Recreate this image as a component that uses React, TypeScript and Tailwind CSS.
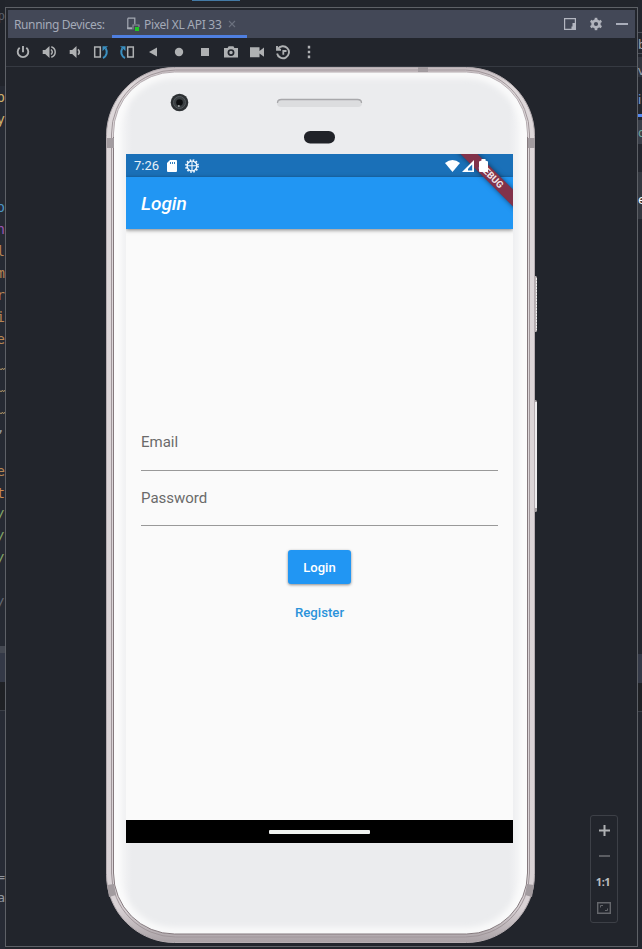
import type { ReactNode } from "react";

type CodeLine = { ch: string; color: string };

const codeLines: CodeLine[] = [
  { ch: "p", color: "text-[#d0b06c]" },
  { ch: "y", color: "text-[#d0b06c]" },
  { ch: "", color: "" },
  { ch: "", color: "" },
  { ch: "", color: "" },
  { ch: "p", color: "text-[#4b94c6]" },
  { ch: "n", color: "text-[#9a55b4]" },
  { ch: "l", color: "text-[#b78554]" },
  { ch: "m", color: "text-[#b78554]" },
  { ch: "r", color: "text-[#b78554]" },
  { ch: "i", color: "text-[#b78554]" },
  { ch: "e", color: "text-[#b78554]" },
  { ch: "~", color: "" },
  { ch: "~", color: "" },
  { ch: "~", color: "" },
  { ch: ",", color: "text-[#8e949f]" },
  { ch: "", color: "" },
  { ch: "e", color: "text-[#b78554]" },
  { ch: "t", color: "text-[#c98a50]" },
  { ch: "/", color: "text-[#85a869]" },
  { ch: "/", color: "text-[#85a869]" },
  { ch: "/", color: "text-[#85a869]" },
  { ch: "", color: "" },
  { ch: "/", color: "text-[#626873]" },
];

function Squiggle() {
  return (
    <svg className="mt-[17px] shrink-0" width="5" height="4" viewBox="0 0 5 4" fill="none">
      <path d="M0 1.500l1 1.500 1.500-2 1 2L5 1" stroke="#a58d62" />
    </svg>
  );
}

function EditorLeft() {
  return (
    <div className="flex w-[5px] shrink-0 flex-col overflow-hidden bg-[#262a33] font-['DejaVu_Sans_Mono',monospace] text-[14px]">
      <div className="flex h-[85.500px] shrink-0 justify-end bg-[#21242b] text-[12px] leading-[32px] text-[#5c616b]">p</div>
      {codeLines.map((l, i) => (
        <div key={i} className={`flex h-[22px] shrink-0 justify-end leading-[23px] ${l.color}`}>
          {l.ch === "~" ? <Squiggle /> : l.ch}
        </div>
      ))}
      <div className="mt-auto h-[7px] shrink-0 bg-[#454952]" />
      <div className="h-[29px] shrink-0 bg-[#343947]" />
      <div className="h-[28px] shrink-0 bg-[#1f2125]" />
      <div className="flex h-[239px] shrink-0 flex-col border-t border-[#3b3f47] bg-[#272b35] pt-[155px] text-[13px] leading-[21px] text-[#90959d]">
        <div className="flex justify-end">=</div>
        <div className="flex justify-end">a</div>
      </div>
    </div>
  );
}

function EditorRight() {
  return (
    <div className="flex w-1 shrink-0 flex-col overflow-hidden bg-[#23262e] font-['Noto_Sans',sans-serif] text-[13px]">
      <div className="h-[33px] shrink-0 border-b border-[#4a4e57]" />
      <div className="h-[21px] shrink-0 border-b border-[#4a4e57] leading-[22px] text-[#9da3ae]">b</div>
      <div className="mt-[3px] h-[20px] shrink-0 bg-[#31353e] leading-[27px] text-[#9da3ae]">v</div>
      <div className="h-[37px] shrink-0 leading-[44px] text-[#7d9fd6]">i</div>
      <div className="h-[3px] shrink-0 bg-[#568af2]" />
      <div className="mt-[3px] h-6 shrink-0 bg-[#3a3f49] leading-[24px] text-[#6ea5a0]">c</div>
      <div className="mt-7 h-[47px] shrink-0 bg-[#343840] leading-[54px] text-white">e</div>
      <div className="mt-[435px] h-[29px] shrink-0 bg-[#343947]" />
      <div className="h-[28px] shrink-0 bg-[#1f2125]" />
      <div className="grow border-t border-[#3b3f47] bg-[#23262e]" />
    </div>
  );
}

function RunningDeviceIcon() {
  return (
    <svg width="14" height="14" viewBox="0 0 14 14" fill="none">
      <path d="M1.8 1.200h7v6M6 11.500H1.800V1.200" stroke="#a5aab4" strokeWidth="1.200" />
      <path d="M1.200 11.300H6" stroke="#a5aab4" strokeWidth="2" />
      <path d="M7 12.500V8h6v2" stroke="#8c929c" strokeWidth="1.100" />
      <path d="M9 10h4v4H9z" fill="#22c527" />
    </svg>
  );
}

function Header() {
  return (
    <div className="mx-[2px] mt-[2px] flex h-7 shrink-0 bg-[#434857] font-['Noto_Sans',sans-serif] text-[12px] leading-[29px] text-[#a3aab7]">
      <span className="w-[104px] whitespace-nowrap pl-[6px] tracking-[-0.380px]">Running Devices:</span>
      <div className="flex w-[135px] items-center border-b-[3px] border-[#4f7fe0] pl-[14px] pt-[3px]">
        <RunningDeviceIcon />
        <span className="ml-[4px] w-[78px] whitespace-nowrap tracking-[-0.280px]">Pixel XL API 33</span>
        <svg className="ml-[6px]" width="8" height="8" viewBox="0 0 8 8">
          <path d="M1 1l6 6M7 1l-6 6" stroke="#6b717e" strokeWidth="1.100" />
        </svg>
      </div>
      <div className="ml-auto flex items-center pr-[7px]">
        <svg width="12" height="12" viewBox="0 0 12 12">
          <path d="M.6.6h10.800v10.800H.6z" fill="none" stroke="#b3b6c0" strokeWidth="1.200" />
          <path d="M8.500 5H12v7H7.500V8.500h1z" fill="#b3b6c0" />
        </svg>
        <svg className="ml-[13px]" width="14" height="14" viewBox="0 0 14 14">
          <g fill="#b0b3bc">
            <path d="M5.700.8h2.600v12.400H5.700z" />
            <path d="M5.700.8h2.600v12.400H5.700z" transform="rotate(60 7 7)" />
            <path d="M5.700.8h2.600v12.400H5.700z" transform="rotate(120 7 7)" />
          </g>
          <circle cx="7" cy="7" r="3.500" fill="none" stroke="#b0b3bc" strokeWidth="2.400" />
          <circle cx="7" cy="7" r="2.100" fill="#434857" />
        </svg>
        <div className="ml-[13px] h-[2px] w-3 bg-[#a9adba]" />
      </div>
    </div>
  );
}

function ToolIcon({ children }: { children: ReactNode }) {
  return (
    <div className="flex w-[26px] justify-center">
      <svg width="16" height="16" viewBox="0 0 16 16" fill="none" stroke="#afb1b3" strokeWidth="1.500">
        {children}
      </svg>
    </div>
  );
}

function Toolbar() {
  return (
    <div className="flex h-[29px] shrink-0 items-center border-b border-[#363a42] pl-1">
      <ToolIcon>
        <path d="M4.700 3.700a5.300 5.300 0 1 0 6.600 0M8 2v6.200" strokeWidth="1.900" />
      </ToolIcon>
      <ToolIcon>
        <path d="M1.700 6h2.500L8.500 2v12L4.200 10H1.700z" fill="#afb1b3" stroke="none" />
        <path d="M10 5.500q2.600 2.500 0 5M10.300 2.700c5.200 2 5.200 8.600 0 10.600" strokeWidth="1.500" />
      </ToolIcon>
      <ToolIcon>
        <path d="M2.700 6h2.500L9.500 2v12L5.200 10H2.700z" fill="#afb1b3" stroke="none" />
        <path d="M11 5.300q2.600 2.700 0 5.400" strokeWidth="1.700" />
      </ToolIcon>
      <ToolIcon>
        <path d="M1.700 3h5.600v10H1.700z" />
        <path d="M10 14c3.800-2 4.800-6 2.700-9.800" stroke="#3a8fc0" strokeWidth="2" />
        <path d="M9.500 2.200H15L9.500 7z" fill="#3a8fc0" stroke="none" />
      </ToolIcon>
      <ToolIcon>
        <path d="M8.700 3h5.600v10H8.700z" />
        <path d="M6 14c-3.800-2-4.800-6-2.700-9.800" stroke="#3a8fc0" strokeWidth="2" />
        <path d="M6.500 2.200H1L6.500 7z" fill="#3a8fc0" stroke="none" />
      </ToolIcon>
      <ToolIcon>
        <path d="M12 3.500v9L4 8z" fill="#afb1b3" stroke="none" />
      </ToolIcon>
      <ToolIcon>
        <circle cx="8" cy="8" r="4.200" fill="#afb1b3" stroke="none" />
      </ToolIcon>
      <ToolIcon>
        <path d="M4 4h8v8H4z" fill="#afb1b3" stroke="none" />
      </ToolIcon>
      <ToolIcon>
        <path d="M1 4h3.600l1-1.800h4.800l1 1.800H15v9.500H1z" fill="#afb1b3" stroke="none" />
        <circle cx="8" cy="8.600" r="2.600" stroke="#22252c" strokeWidth="1.700" />
      </ToolIcon>
      <ToolIcon>
        <path d="M1 3.200h9.500V7L15 3.500v9.200L10.500 9.500v3.700H1z" fill="#afb1b3" stroke="none" />
      </ToolIcon>
      <ToolIcon>
        <path d="M2.800 5.200A6 6 0 1 1 2.100 9.500M2 2v3.800h4" strokeWidth="1.900" />
        <path d="M11.500 7H8.300v3.800" strokeWidth="1.800" />
      </ToolIcon>
      <ToolIcon>
        <path d="M6.800 1.800h2.400v2.600H6.800zM6.800 6.700h2.400v2.600H6.800zM6.800 11.600h2.400v2.600H6.800z" fill="#afb1b3" stroke="none" />
      </ToolIcon>
    </div>
  );
}

function PhoneShell() {
  return (
    <svg className="absolute left-0 top-0" width="432" height="876" viewBox="0 0 432 876">
      <defs>
        <linearGradient id="rim" x1="0" y1="0" x2="0" y2="1">
          <stop offset="0" stopColor="#c5bcc0" />
          <stop offset=".02" stopColor="#ded8da" />
          <stop offset=".96" stopColor="#d9d2d5" />
          <stop offset="1" stopColor="#a9a1a5" />
        </linearGradient>
        <linearGradient id="face" x1="0" y1="0" x2="1" y2="0">
          <stop offset="0" stopColor="#fafafb" />
          <stop offset=".045" stopColor="#ebecee" />
          <stop offset=".955" stopColor="#ebecee" />
          <stop offset="1" stopColor="#fafafb" />
        </linearGradient>
        <filter id="soft" x="-5%" y="-5%" width="110%" height="110%">
          <feGaussianBlur stdDeviation="3" />
        </filter>
        <clipPath id="faceClip">
          <rect x="8" y="5" width="413" height="862" rx="61" />
        </clipPath>
      </defs>
      <rect x="427" y="209" width="4" height="56" rx="1.500" fill="#b9b3b5" />
      <path d="M430.500 211v52" stroke="#eee" strokeDasharray="2 1" />
      <rect x="427" y="333" width="4" height="112" rx="1.500" fill="#a5a1a3" />
      <path d="M429.500 335v106" stroke="#eeedef" strokeWidth="3" />
      <rect x=".5" y=".5" width="428" height="875" rx="68" fill="url(#rim)" stroke="#b5adb1" />
      <rect x="5.500" y="3" width="418" height="867" rx="64" fill="none" stroke="#a0969a" />
      <rect x="7.500" y="5" width="414" height="862" rx="61" fill="url(#face)" />
      <g clipPath="url(#faceClip)">
        <rect x="10" y="7" width="409" height="858" rx="59" fill="none" stroke="#fcfcfc" strokeWidth="8" filter="url(#soft)" />
      </g>
      <path d="M7.500 70V806a61 61 0 0 0 61 61H360.500a61 61 0 0 0 61-61V70" fill="none" stroke="#857a7e" />
      <path d="M7.500 70V66a61 61 0 0 1 61-61H360.500a61 61 0 0 1 61 61v4" fill="none" stroke="#b5acb0" />
      <g fill="#a29b9f">
        <path d="M312 0h10v5h-10zM1 71h7v10H1zM422 71h7v10h-7zM1 818l7-1 2 11-7 2zM428 818l-7-1-2 11 7 2z" />
      </g>
      <circle cx="73.500" cy="35.500" r="8.800" fill="#2d3134" />
      <circle cx="73.500" cy="35.500" r="6" fill="#3a3f42" stroke="#54595d" />
      <circle cx="73.500" cy="35.500" r="3.300" fill="#0c0e10" />
      <circle cx="72.800" cy="39" r="1" fill="#a4a9ab" />
      <rect x="171" y="32" width="85" height="8" rx="4" fill="#dcdddf" />
      <path d="M171.500 36q0-3.500 4-3.500h76q4 0 4 3.500" fill="none" stroke="#a8a8ab" strokeWidth="1.300" />
      <rect x="198" y="64" width="31" height="12.500" rx="6.200" fill="#202228" />
    </svg>
  );
}

function StatusBar() {
  return (
    <div className="flex h-[23px] shrink-0 items-center bg-[#1a70b8] pl-2 text-[13px] text-[#e8f1f8]">
      <span className="w-[31px] leading-[24px]">7:26</span>
      <svg className="ml-[2px]" width="10" height="12" viewBox="0 0 10 12">
        <path d="M3 0h6q1 0 1 1v10q0 1-1 1H1q-1 0-1-1V3z" fill="#fff" />
        <path d="M3.500 2v2M5.500 2v2M7.500 2v2" stroke="#1a70b8" strokeWidth=".9" />
      </svg>
      <svg className="ml-[8px]" width="14" height="14" viewBox="0 0 14 14" fill="none" stroke="#f4faff">
        <circle cx="7" cy="7" r="4.900" strokeWidth="1.400" />
        <circle cx="7" cy="7" r="6.100" strokeWidth="1.600" strokeDasharray="1.600 1.595" />
        <path d="M2 6.700h10M7 3v9" strokeWidth="1.100" />
      </svg>
      <div className="relative z-20 ml-auto mr-[25px] flex items-center">
        <svg width="15" height="12" viewBox="0 0 15 12">
          <path d="M0 3Q7.500-3 15 3L7.500 12z" fill="#fff" />
        </svg>
        <svg className="ml-[2px]" width="12" height="12" viewBox="0 0 12 12">
          <path d="M12 0v12H0z" fill="#fff" />
          <path d="M10.200 4.500v6H6V8.700z" fill="#1a70b8" />
        </svg>
        <svg className="ml-[5px]" width="9" height="13" viewBox="0 0 9 13">
          <path d="M2.500 1.500V0h4v1.500L9 2.500V12q0 1-1 1H1q-1 0-1-1V2.500z" fill="#fff" />
        </svg>
      </div>
    </div>
  );
}

function Field({ label }: { label: string }) {
  return (
    <div className="h-[55.500px] border-b border-[#999] text-[15px] leading-[18px] text-[#6a6a6a]">
      <div className="pt-[18px]">{label}</div>
    </div>
  );
}

function Screen() {
  return (
    <div className="relative mt-[87px] flex h-[689px] w-[387px] flex-col overflow-hidden bg-[#fafafa] font-['Roboto',sans-serif]">
      <StatusBar />
      <div className="flex h-[52px] shrink-0 items-center bg-[#2196f3] pl-[15px] pt-[2px] text-[19px] font-medium italic text-white shadow-[0_1px_4px_rgba(0,0,0,0.5)]">
        Login
      </div>
      <div className="absolute right-[-38px] top-[16px] z-10 h-[12px] w-[120px] rotate-45 bg-[#82324a] text-center text-[9.500px] font-bold leading-[12px] text-[#f3e8ea] shadow-[0_0_5px_rgba(0,0,0,0.5)]">
        DEBUG
      </div>
      <div className="flex grow flex-col px-[15px] pt-[186px]">
        <Field label="Email" />
        <Field label="Password" />
        <div className="mt-[24px] flex h-[34px] w-[63px] items-center justify-center self-center rounded-[3px] bg-[#2196f3] pt-[2px] text-[13px] font-medium text-white shadow-[0_1px_3px_rgba(0,0,0,0.45)]">
          Login
        </div>
        <div className="mt-[20px] self-center text-[13.200px] font-medium leading-[18px] text-[#2b93da]">Register</div>
      </div>
      <div className="flex h-[23px] shrink-0 items-center justify-center bg-black">
        <div className="h-1 w-[101px] rounded-[1px] bg-[#f0f2f0]" />
      </div>
    </div>
  );
}

function ZoomControls() {
  return (
    <div className="mb-[23px] mr-[19px] ml-auto flex h-[108px] w-7 flex-col items-center self-end rounded-[3px] border border-[#3d4047]">
      <svg className="mt-[9px]" width="11" height="11" viewBox="0 0 11 11">
        <path d="M0 5.500h11M5.500 0v11" stroke="#afb1b3" strokeWidth="2" />
      </svg>
      <div className="mt-[19px] h-[2px] w-[11px] bg-[#5b5d62]" />
      <div className="mr-[2px] mt-[16px] h-[18px] font-['Noto_Sans',sans-serif] text-[11px] font-bold leading-[18px] tracking-[-0.400px] text-[#bbbdbf]">1:1</div>
      <svg className="mt-[11px]" width="14" height="12" viewBox="0 0 14 12" fill="none" stroke="#65676c">
        <path d="M.7.7h12.600v10.600H.7z" strokeWidth="1.400" />
        <path d="M3.500 5.500v-2h2.500M10.500 6.500v2H8" />
      </svg>
    </div>
  );
}

export default function App() {
  return (
    <div className="flex h-[949px] w-[642px] overflow-hidden bg-[#22252c]">
      <EditorLeft />
      <div className="flex w-[633px] shrink-0 flex-col">
        <div className="flex h-[7px] shrink-0 pl-[187px]">
          <div className="h-px w-12 bg-[#4379a5]" />
        </div>
        <div className="flex h-[940px] shrink-0 flex-col border border-[#5e6167]">
          <Header />
          <Toolbar />
          <div className="flex h-[879px] shrink-0">
            <div className="relative ml-[100px] flex h-[876px] w-[432px] shrink-0 pl-[20px]">
              <PhoneShell />
              <Screen />
            </div>
            <ZoomControls />
          </div>
        </div>
      </div>
      <EditorRight />
    </div>
  );
}
